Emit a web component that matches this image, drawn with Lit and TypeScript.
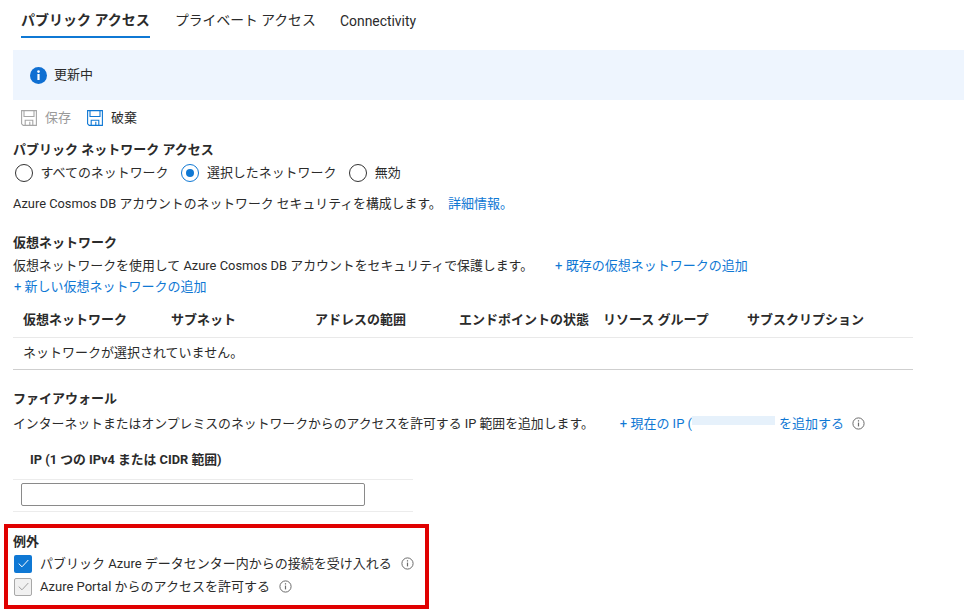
import { LitElement, html, css, svg } from "lit";
import { customElement } from "lit/decorators.js";

const floppy = (c: string) => html`<svg width="16" height="16" viewBox="0 0 16 16" fill="none" stroke="${c}" stroke-width="1.1">
  <path d="M.6.6h14.8v14.8H2.2L.6 13.8z"/><path d="M3 .8v5.7h10V.8"/><path d="M4.2 15.3v-5h7.6v5"/><path d="M8.8 11.8v3.4"/></svg>`;
const info = html`<svg class="hint" width="13" height="13" viewBox="0 0 13 13" fill="none" stroke="#6b6b6b">
  <circle cx="6.5" cy="6.5" r="5.6"/><path d="M6.5 5.6v3.8" stroke-width="1.2"/><path d="M6.5 3.2v1.3" stroke-width="1.2"/></svg>`;
const check = (c: string) => svg`<svg width="11" height="9" viewBox="0 0 11 9" fill="none" stroke="${c}" stroke-width="1"><path d="M.7 4.6l3.3 3.2L10.3 1"/></svg>`;

@customElement("app-root")
export class AppRoot extends LitElement {
  static styles = css`
    :host { display: block; width: 964px; height: 616px; overflow: hidden; background: #fff; color: #2b2b2b;
      font: 13px/18px Roboto, "Noto Sans CJK JP", sans-serif; }
    .tabs { display: flex; height: 38px; padding-left: 21px; font-size: 14px; }
    .tab { height: 38px; box-sizing: border-box; padding-top: 11px; line-height: 18px; white-space: nowrap; }
    .tab.on { width: 129px; font-weight: 700; border-bottom: 2px solid #0f78d4; }
    .tab.priv { margin-left: 25px; width: 140px; font-size: 13.8px; }
    .tab.conn { margin-left: 25px; font-size: 13.9px; padding-top: 12px; }
    .banner { display: flex; align-items: center; gap: 7px; height: 50px; margin: 12px 0 0 13px; padding-left: 17px; background: #eef5fe; }
    .banner svg { display: block; }
    .toolbar { display: flex; align-items: center; height: 18px; margin-top: 9px; padding-left: 21px; }
    .toolbar svg { display: block; margin-right: 8px; }
    .toolbar .off { color: #9a9a9a; margin-right: 16px; }
    .main { padding-left: 13px; }
    h3 { margin: 0; font-size: 13px; line-height: 18px; font-weight: 700; white-space: nowrap; }
    .h-public { margin-top: 14px; }
    .radios { display: flex; align-items: center; height: 18px; margin-top: 5px; padding-left: 1.5px; font-size: 12.95px; }
    .radio { width: 16px; height: 16px; border: 1px solid #333; border-radius: 50%; margin-right: 8px; flex: none; display: flex; align-items: center; justify-content: center; }
    .radio.on { border-color: #0f78d4; }
    .radio.on i { width: 8px; height: 8px; border-radius: 50%; background: #0f78d4; }
    .radio-label { margin-right: 12.5px; white-space: nowrap; }
    .line { white-space: nowrap; display: flex; align-items: center; height: 18px; }
    .desc { margin-top: 13px; font-size: 12.85px; }
    a { color: #0f78d4; text-decoration: none; white-space: nowrap; font-size: 13px; }
    .h-vnet { margin-top: 21px; }
    .v1 { margin-top: 5px; font-size: 12.9px; }
    .v1 a { margin-left: 22px; }
    .v2 { margin-top: 3px; padding-left: 1px; }
    table { border-collapse: collapse; table-layout: fixed; width: 900px; margin-top: 9px; }
    th { text-align: left; font-size: 13px; font-weight: 700; height: 32px; box-sizing: border-box; padding: 0 0 1px 10px; border-bottom: 1px solid #e9e9e9; line-height: 18px; white-space: nowrap; }
    td { height: 32px; box-sizing: border-box; padding: 0 0 0 10px; border-bottom: 1px solid #cfcfcf; }
    .h-fw { margin-top: 20px; }
    .fw { margin-top: 7px; font-size: 12.85px; }
    .fw a.add { margin-left: 26px; }
    .blur { display: inline-block; width: 83px; height: 9px; margin: 1px 4px 0 0; background: #e6f1fb; align-self: flex-start; }
    .fw .hint { margin-left: 8px; }
    .ip { width: 400px; margin-top: 18px; }
    .ip-head { height: 28px; padding-left: 17px; line-height: 18px; font-size: 12.8px; font-weight: 700; border-bottom: 1px solid #ececec; white-space: nowrap; }
    .ip-body { height: 32px; box-sizing: border-box; padding: 3px 0 0 8px; border-bottom: 1px solid #ececec; }
    .ip-input { width: 344px; height: 23px; box-sizing: border-box; border: 1px solid #8a8a8a; border-radius: 2px; background: #fff; }
    .exceptions { box-sizing: border-box; width: 425px; height: 85px; margin: 12px 0 0 4px; border: 4px solid #e00000; padding: 5px 0 0 5px; }
    .exceptions h3 { line-height: 18px; }
    .cb-row { display: flex; align-items: center; height: 18px; white-space: nowrap; }
    .r1 { margin-top: 4px; }
    .r2 { margin-top: 5px; }
    .cb { width: 18px; height: 18px; box-sizing: border-box; margin-left: 1px; margin-right: 8px; border-radius: 2px; display: flex; align-items: center; justify-content: center; flex: none; }
    .cb.on { background: #0f78d4; }
    .cb.off { background: #f1f1f1; border: 1px solid #a8a8a8; }
    .cb svg { display: block; }
    .cb-row .hint { margin-left: 9px; }
  `;

  render() {
    return html`
      <div class="tabs">
        <div class="tab on">パブリック アクセス</div>
        <div class="tab priv">プライベート アクセス</div>
        <div class="tab conn">Connectivity</div>
      </div>
      <div class="banner">
        <svg width="17" height="17" viewBox="0 0 17 17"><circle cx="8.5" cy="8.5" r="8.5" fill="#0f6fd2"/><rect x="7.4" y="7" width="2.2" height="6" fill="#fff"/><circle cx="8.5" cy="4.6" r="1.3" fill="#fff"/></svg>
        <span>更新中</span>
      </div>
      <div class="toolbar">
        ${floppy("#a6a6a6")}<span class="off">保存</span>
        ${floppy("#0f78d4")}<span>破棄</span>
      </div>
      <div class="main">
        <h3 class="h-public">パブリック ネットワーク アクセス</h3>
        <div class="radios">
          <span class="radio"></span><span class="radio-label">すべてのネットワーク</span>
          <span class="radio on"><i></i></span><span class="radio-label">選択したネットワーク</span>
          <span class="radio"></span><span class="radio-label">無効</span>
        </div>
        <div class="line desc">Azure Cosmos DB アカウントのネットワーク セキュリティを構成します。&nbsp;&nbsp;<a href="#">詳細情報。</a></div>
        <h3 class="h-vnet">仮想ネットワーク</h3>
        <div class="line v1">仮想ネットワークを使用して Azure Cosmos DB アカウントをセキュリティで保護します。<a href="#">+ 既存の仮想ネットワークの追加</a></div>
        <div class="line v2"><a href="#">+ 新しい仮想ネットワークの追加</a></div>
        <table>
          <colgroup><col style="width:148px"><col style="width:144px"><col style="width:144px"><col style="width:144px"><col style="width:144px"><col></colgroup>
          <thead><tr><th>仮想ネットワーク</th><th>サブネット</th><th>アドレスの範囲</th><th>エンドポイントの状態</th><th>リソース グループ</th><th>サブスクリプション</th></tr></thead>
          <tbody><tr><td colspan="6">ネットワークが選択されていません。</td></tr></tbody>
        </table>
        <h3 class="h-fw">ファイアウォール</h3>
        <div class="line fw">インターネットまたはオンプレミスのネットワークからのアクセスを許可する IP 範囲を追加します。<a class="add" href="#">+ 現在の IP (</a><span class="blur"></span><a href="#">を追加する</a>${info}</div>
        <div class="ip">
          <div class="ip-head">IP (1 つの IPv4 または CIDR 範囲)</div>
          <div class="ip-body"><div class="ip-input"></div></div>
        </div>
      </div>
      <div class="exceptions">
        <h3>例外</h3>
        <div class="cb-row r1"><span class="cb on">${check("#fff")}</span>パブリック Azure データセンター内からの接続を受け入れる${info}</div>
        <div class="cb-row r2"><span class="cb off">${check("#a0a0a0")}</span>Azure Portal からのアクセスを許可する${info}</div>
      </div>
    `;
  }
}
